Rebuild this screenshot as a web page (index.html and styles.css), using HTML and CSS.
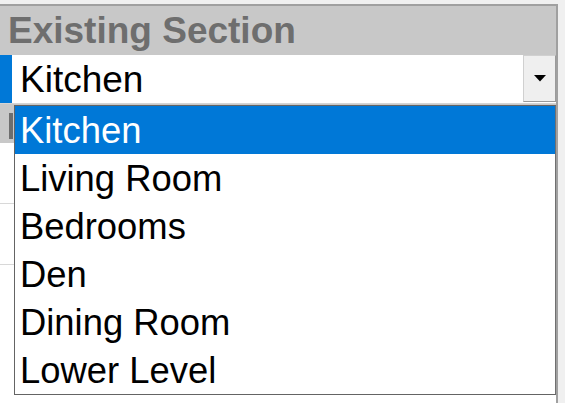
FILE: index.html
```html
<!DOCTYPE html>
<html>
<head>
<meta charset="utf-8">
<link rel="stylesheet" href="styles.css">
</head>
<body>
<div class="panel">
  <div class="section-header">Existing Section</div>
  <div class="select-row">
    <div class="marker"></div>
    <div class="select">
      <span class="select-value">Kitchen</span>
      <div class="drop-btn">
        <svg width="12" height="7" viewBox="0 0 12 7"><polygon points="0,0 12,0 6,6.5" fill="#000"/></svg>
      </div>
    </div>
    <ul class="listbox">
      <li class="item selected">Kitchen</li>
      <li class="item">Living Room</li>
      <li class="item">Bedrooms</li>
      <li class="item">Den</li>
      <li class="item">Dining Room</li>
      <li class="item">Lower Level</li>
    </ul>
  </div>
  <div class="section-header second"><span class="stem"></span></div>
  <div class="field-row"></div>
  <div class="field-row"></div>
</div>
</body>
</html>
```

FILE: styles.css
```css
html, body {
  margin: 0;
  padding: 0;
}
body {
  background: #f0f0f0;
  padding-top: 4px;
  height: 403px;
  box-sizing: border-box;
  overflow: hidden;
  font-family: "Liberation Sans", Arial, sans-serif;
}
.panel {
  width: 556px;
  height: 397px;
  overflow: hidden;
  background: #fff;
  border-top: 2px solid #a0a0a0;
  border-right: 2px solid #a0a0a0;
  position: relative;
}
.section-header {
  height: 49px;
  line-height: 50px;
  background: #c8c8c8;
  color: #6e6e6e;
  font-weight: bold;
  font-size: 37px;
  padding-left: 8px;
  white-space: nowrap;
}
.section-header.second {
  height: 39px;
  display: flex;
  align-items: flex-start;
  padding-left: 9px;
}
.stem {
  width: 4px;
  height: 26px;
  margin-top: 9px;
  background: #6e6e6e;
}
.select-row {
  display: flex;
  height: 48px;
  border-bottom: 1px solid #d4d4d4;
  position: relative;
}
.marker {
  width: 12px;
  background: #0078d7;
}
.select {
  flex: 1;
  display: flex;
  align-items: stretch;
  background: #fff;
}
.select-value {
  flex: 1;
  padding-left: 8px;
  font-size: 37px;
  line-height: 50px;
  color: #000;
}
.drop-btn {
  width: 31px;
  height: 45px;
  background: #efefef;
  border: 1px solid #d0d0d0;
  border-right-color: #9a9a9a;
  border-bottom-color: #9a9a9a;
  display: flex;
  align-items: center;
  justify-content: center;
}
.listbox {
  position: absolute;
  left: 14px;
  top: 50px;
  width: 540px;
  margin: 0;
  padding: 0;
  list-style: none;
  background: #fff;
  border: 1px solid #646464;
  border-right: 2px solid #707070;
  z-index: 2;
}
.item {
  height: 48px;
  line-height: 50px;
  font-size: 36.4px;
  padding-left: 5px;
  color: #000;
  white-space: nowrap;
  overflow: hidden;
}
.item.selected {
  background: #0078d7;
  color: #fff;
}
.field-row {
  height: 60px;
  border-bottom: 1px solid #d8d8d8;
}
```
